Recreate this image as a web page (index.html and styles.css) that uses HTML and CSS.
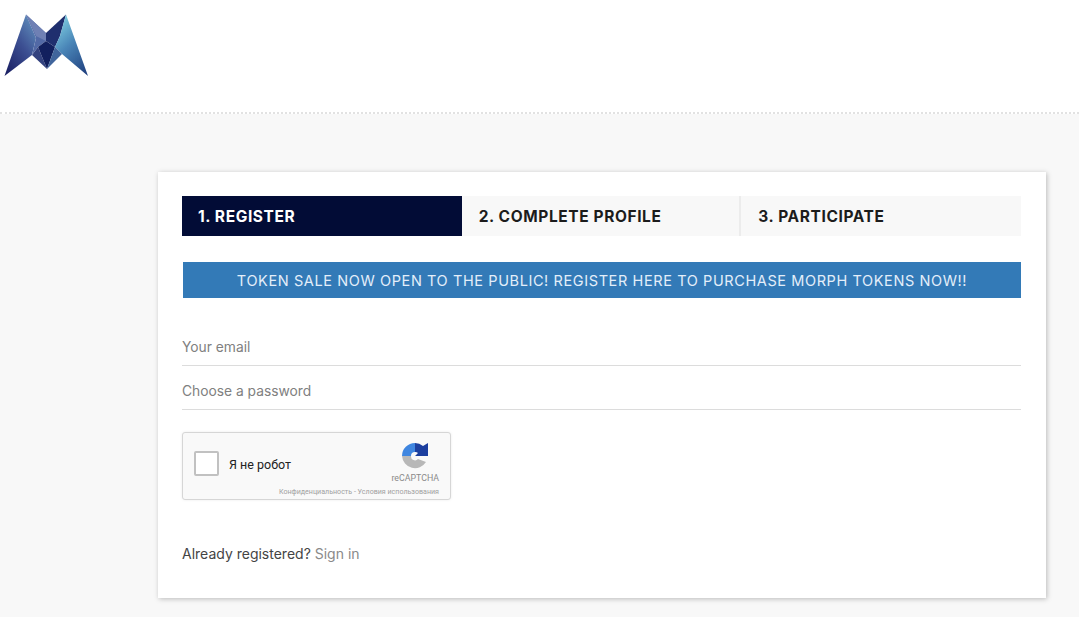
FILE: index.html
```html
<!DOCTYPE html>
<html lang="en">
<head>
  <meta charset="UTF-8">
  <title>Morph Token Sale</title>
  <link rel="stylesheet" href="styles.css">
</head>
<body>
  <header class="top-bar">
    <svg class="logo" width="92" height="80" viewBox="0 0 92 80">
      <defs>
        <linearGradient id="wingLeft" x1="0.1" y1="1" x2="0.8" y2="0">
          <stop offset="0" stop-color="#1a1f63"/>
          <stop offset="0.55" stop-color="#3c4f92"/>
          <stop offset="1" stop-color="#5f8dbb"/>
        </linearGradient>
        <linearGradient id="wingRight" x1="0.9" y1="1" x2="0.4" y2="0">
          <stop offset="0" stop-color="#1f3f7e"/>
          <stop offset="0.6" stop-color="#4a86b8"/>
          <stop offset="1" stop-color="#78c6dc"/>
        </linearGradient>
      </defs>
      <polygon points="4.5,76 26,14.5 36,38 32,55" fill="url(#wingLeft)"/>
      <polygon points="26,14.5 46,33 46,41 38,47 32,55 36,38" fill="#5269a6"/>
      <polygon points="26,14.5 46,33 46,41 36,36" fill="#6f80b4"/>
      <polygon points="32,55 38,47 47,69" fill="#33427f"/>
      <polygon points="38,47 46,41 55,47 47,69" fill="#12205e"/>
      <polygon points="66,14.5 46,33 46,41 55,47 60,36" fill="#1f2f6e"/>
      <polygon points="66,14.5 88,76 62,54 55,47 60,36" fill="url(#wingRight)"/>
      <polygon points="55,47 62,54 47,69" fill="#41659c"/>
    </svg>
  </header>

  <main class="page">
    <section class="card">
      <nav class="steps">
        <div class="step active">1. REGISTER</div>
        <div class="step">2. COMPLETE PROFILE</div>
        <div class="step">3. PARTICIPATE</div>
      </nav>

      <div class="banner">TOKEN SALE NOW OPEN TO THE PUBLIC! REGISTER HERE TO PURCHASE MORPH TOKENS NOW!!</div>

      <form class="register-form">
        <input class="field" type="text" placeholder="Your email">
        <input class="field" type="password" placeholder="Choose a password">

        <div class="captcha">
          <span class="captcha-box"></span>
          <span class="captcha-label">Я не робот</span>
          <div class="captcha-brand">
            <svg class="captcha-icon" width="30" height="28" viewBox="0 0 30 28">
              <path d="M15 1 A13 13 0 0 0 2 14 H11 A4 4 0 0 1 15 10 Z" fill="#3f86e0"/>
              <path d="M15 1 A13 13 0 0 1 23 4 L28 1 V14 H15 L18 11 A4 4 0 0 0 15 10 Z" fill="#1c3f9f"/>
              <path d="M2 14 H11 A4 4 0 0 0 18 17 L26 20 A13 13 0 0 1 2 14 Z" fill="#b8b8b8"/>
            </svg>
            <span class="captcha-name">reCAPTCHA</span>
          </div>
          <span class="captcha-links">Конфиденциальность - Условия использования</span>
        </div>
      </form>

      <p class="signin">Already registered? <a href="#">Sign in</a></p>
    </section>
  </main>
</body>
</html>
```

FILE: styles.css
```css
* {
  box-sizing: border-box;
}

body {
  margin: 0;
  background-color: #f8f8f8;
  font-family: Inter, "Open Sans", sans-serif;
  color: #333;
}

.top-bar {
  height: 114px;
  background: #fff;
  border-bottom: 2px dotted #e2e2e2;
}

.logo {
  display: block;
  filter: blur(0.5px);
}

.page {
  padding: 58px 33px 18px 158px;
}

.card {
  background: #fff;
  padding: 24px 25px 32px 24px;
  height: 426px;
  box-shadow: 1px 1px 5px rgba(0, 0, 0, 0.25);
}

.steps {
  display: grid;
  grid-template-columns: repeat(3, 1fr);
  height: 40px;
  background: #f8f8f8;
}

.step {
  display: flex;
  align-items: center;
  padding-left: 17px;
  font-size: 15.5px;
  font-weight: 700;
  letter-spacing: 0.6px;
  color: #1c1c1c;
}

.step:nth-child(2) {
  border-right: 2px solid #ececec;
}

.step.active {
  background: #020c36;
  color: #fff;
  padding-left: 16px;
}

.banner {
  margin: 26px 0 0 1px;
  height: 36px;
  display: flex;
  align-items: center;
  justify-content: center;
  background: #337ab7;
  color: #e3eefa;
  font-size: 14.5px;
  letter-spacing: 0.6px;
}

.register-form {
  display: flex;
  flex-direction: column;
  align-items: flex-start;
  margin-top: 24px;
}

.field {
  width: 100%;
  height: 44px;
  border: none;
  border-bottom: 1px solid #dcdcdc;
  outline: none;
  padding: 7px 0 0;
  font-family: inherit;
  font-size: 13.8px;
}

.field::placeholder {
  color: #808080;
  opacity: 1;
}

.captcha {
  position: relative;
  margin-top: 22px;
  width: 269px;
  height: 68px;
  display: flex;
  align-items: center;
  padding-left: 11px;
  background: #f9f9f9;
  border: 1px solid #d6d6d6;
  border-radius: 3px;
  box-shadow: 0 0 3px rgba(0, 0, 0, 0.08);
  font-family: Roboto, sans-serif;
}

.captcha-box {
  width: 25px;
  height: 25px;
  background: #fff;
  border: 2px solid #c1c1c1;
  border-radius: 2px;
  margin-bottom: 5px;
}

.captcha-label {
  margin: 0 0 3px 10px;
  font-size: 12.5px;
  color: #222;
}

.captcha-brand {
  position: absolute;
  top: 9px;
  right: 11px;
  display: flex;
  flex-direction: column;
  align-items: center;
}

.captcha-icon {
  filter: blur(0.5px);
}

.captcha-name {
  margin-top: 3px;
  font-size: 8.8px;
  color: #8a8a8a;
}

.captcha-links {
  position: absolute;
  right: 11px;
  bottom: 3px;
  font-size: 7.1px;
  color: #a0a0a0;
  white-space: nowrap;
}

.signin {
  margin: 45px 0 0;
  font-size: 14px;
  color: #444;
}

.signin a {
  color: #8a8a8a;
  text-decoration: none;
}
```
